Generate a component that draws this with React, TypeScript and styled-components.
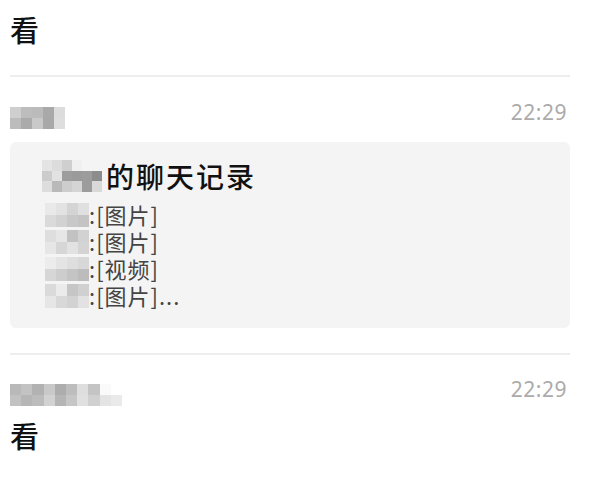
import styled, { createGlobalStyle } from "styled-components";

const GlobalStyle = createGlobalStyle`
  body {
    margin: 0;
    background: #fff;
    font-family: "Noto Sans CJK SC", "Noto Sans", sans-serif;
  }
`;

// 马赛克（打码的昵称）：每格一个灰度
type Cells = string[][];

const nameA: Cells = [
  ["#cfcfcf", "#bdbdbd", "#bbbbbb", "#a9a9a9", "#dcdcdc"],
  ["#bcbcbc", "#ababab", "#c9c9c9", "#a8a8a8", "#dedede"],
];
const nameB: Cells = [
  ["#b9b9b9", "#c3c3c3", "#b2b2b2", "#c9c9c9", "#adadad", "#bdbdbd", "#dedede", "#c4c4c4", "#fafafa", "#ffffff"],
  ["#c2c2c2", "#b6b6b6", "#bcbcbc", "#d2d2d2", "#b5b5b5", "#c6c6c6", "#e0e0e0", "#d0d0d0", "#e4e4e4", "#eaeaea"],
];
const titleName: Cells = [
  ["#e4e4e4", "#dcdcdc", "#cfcfcf", "#f0f0f0", "#f4f4f4", "#f4f4f4"],
  ["#cccccc", "#e2e2e2", "#9d9d9d", "#9a9a9a", "#9c9c9c", "#8c8c8c"],
  ["#dddddd", "#b9b9b9", "#cdcdcd", "#d5d5d5", "#9c9c9c", "#d9d9d9"],
];
const lineNames: Cells[] = [
  [
    ["#e9e9e9", "#e2e2e2", "#d4d4d4", "#e0e0e0"],
    ["#dadada", "#d2d2d2", "#c8c8c8", "#c4c4c4"],
  ],
  [
    ["#dedede", "#e6e6e6", "#c2c2c2", "#d2d2d2"],
    ["#e6e6e6", "#d6d6d6", "#e2e2e2", "#d4d4d4"],
  ],
  [
    ["#ececec", "#e4e4e4", "#dedede", "#d8d8d8"],
    ["#d6d6d6", "#cdcdcd", "#c4c4c4", "#bcbcbc"],
  ],
  [
    ["#dadada", "#ebebeb", "#c6c6c6", "#d0d0d0"],
    ["#e6e6e6", "#d8d8d8", "#d2d2d2", "#e2e2e2"],
  ],
];

const records = ["[图片]", "[图片]", "[视频]", "[图片]..."];

const Mosaic = ({ cells, w, h }: { cells: Cells; w: number; h: number }) => (
  <Grid $cols={cells[0].length} $w={w} $h={h}>
    {cells.flat().map((c, i) => (
      <Cell key={i} $c={c} />
    ))}
  </Grid>
);

const App = () => {
  return (
    <>
      <GlobalStyle />
      <Page>
        <FirstText>看</FirstText>
        <Divider />

        <Header>
          <Mosaic cells={nameA} w={11} h={11} />
          <Time>22:29</Time>
        </Header>
        <Card>
          <Title>
            <Mosaic cells={titleName} w={10} h={10.5} />
            <span>的聊天记录</span>
          </Title>
          {records.map((r, i) => (
            <Line key={i}>
              <Mosaic cells={lineNames[i]} w={11} h={12} />
              <span>:{r}</span>
            </Line>
          ))}
        </Card>
        <Divider $top={25} />

        <Header $top={29}>
          <Mosaic cells={nameB} w={11.2} h={11} />
          <Time>22:29</Time>
        </Header>
        <Text>看</Text>
      </Page>
    </>
  );
};
export default App;

const Page = styled.div`
  width: 560px;
  padding-left: 10px;
  height: 480px;
  overflow: hidden;
`;
const FirstText = styled.div`
  padding-top: 11px;
  font-size: 29px;
  font-weight: 500;
  line-height: 36px;
  color: #111;
  margin-bottom: 28px;
`;
const Divider = styled.div<{ $top?: number }>`
  height: 2px;
  background: #eeeeee;
  margin-top: ${({ $top }) => $top ?? 0}px;
`;
const Header = styled.div<{ $top?: number }>`
  display: flex;
  justify-content: space-between;
  align-items: flex-start;
  padding-top: ${({ $top }) => $top ?? 30}px;
`;
const Time = styled.span`
  font-family: "Noto Sans", sans-serif;
  font-size: 21px;
  line-height: 24px;
  margin-top: -7px;
  margin-right: 3px;
  color: #ababab;
  letter-spacing: 0.5px;
`;
const Grid = styled.div<{ $cols: number; $w: number; $h: number }>`
  display: grid;
  grid-template-columns: repeat(${({ $cols }) => $cols}, ${({ $w }) => $w}px);
  grid-auto-rows: ${({ $h }) => $h}px;
  flex-shrink: 0;
`;
const Cell = styled.div<{ $c: string }>`
  background: ${({ $c }) => $c};
`;
const Card = styled.div`
  margin-top: 13px;
  background: #f4f4f4;
  border-radius: 6px;
  padding: 17px 20px 19px 32px;
`;
const Title = styled.div`
  display: flex;
  align-items: center;
  gap: 4px;
  font-size: 28px;
  font-weight: 500;
  letter-spacing: 2px;
  line-height: 34px;
  color: #111;
  margin-bottom: 8px;
`;
const Line = styled.div`
  display: flex;
  align-items: center;
  padding-left: 3px;
  font-size: 22px;
  letter-spacing: 1px;
  line-height: 27px;
  color: #444;
`;
const Text = styled.div`
  margin-top: 11px;
  font-size: 29px;
  font-weight: 500;
  line-height: 36px;
  color: #111;
`;
